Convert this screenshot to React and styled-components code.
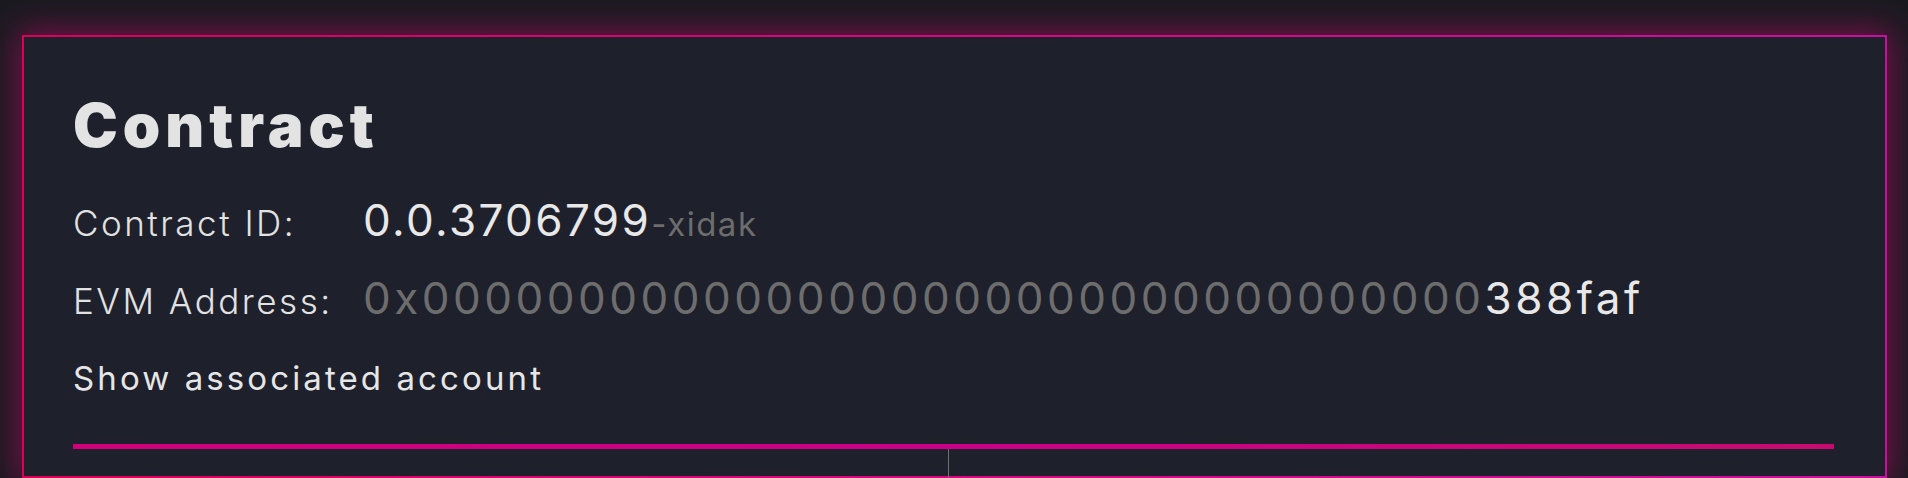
import React from 'react';
import styled, { createGlobalStyle } from 'styled-components';

const GlobalStyle = createGlobalStyle`
  html, body {
    margin: 0;
    padding: 0;
    background: #1b1a21;
    overflow: hidden;
  }
  body {
    font-family: Inter, "Noto Sans", sans-serif;
    color: #e4e4e4;
  }
`;

const Page = styled.div`
  height: 478px;
  padding: 35px 21px 0 22px;
  box-sizing: border-box;
`;

const Card = styled.section`
  background: #1e202c;
  border: 2px solid;
  border-image: linear-gradient(90deg, #dc0058, #d40a88 60%, #c810a0) 1;
  box-shadow: 0 0 30px 4px rgba(200, 10, 110, 0.55);
  padding: 52px 51px 0 49px;
  height: 100%;
  box-sizing: border-box;
`;

const Title = styled.h1`
  margin: 0;
  font-size: 60px;
  line-height: 72px;
  font-weight: 900;
  letter-spacing: 5px;
  color: #e3e3e3;
`;

const Row = styled.div`
  display: grid;
  grid-template-columns: 290px auto;
  align-items: baseline;
  line-height: 56px;
  margin-top: ${(p) => p.$gap}px;
`;

const Label = styled.span`
  font-size: 35px;
  font-weight: 300;
  letter-spacing: 2.5px;
  color: #e2e2e2;
`;

const Value = styled.span`
  font-size: 44px;
  font-weight: 400;
  letter-spacing: ${(p) => p.$spacing}px;
  color: #e8e8e8;
  white-space: nowrap;
`;

const Dim = styled.span`
  color: #6d6d6d;
  font-size: ${(p) => p.$size || 44}px;
  letter-spacing: ${(p) => (p.$size ? '1.5px' : 'inherit')};
`;

const ShowLink = styled.a`
  display: block;
  margin-top: 29px;
  font-size: 33px;
  line-height: 40px;
  font-weight: 400;
  letter-spacing: 3.1px;
  color: #e6e6e6;
  cursor: pointer;
`;

const Divider = styled.hr`
  margin: 46px 0 0;
  border: none;
  height: 5px;
  background: linear-gradient(90deg, #d2007a, #cc0088 50%, #c80a70);
`;

const Columns = styled.div`
  display: grid;
  grid-template-columns: 875px 1fr;
  height: 80px;
`;

const Column = styled.div`
  border-left: ${(p) => (p.$split ? '1px solid #707070' : 'none')};
`;

export default function App() {
  return (
    <>
      <GlobalStyle />
      <Page>
        <Card>
          <Title>Contract</Title>
          <Row $gap={31}>
            <Label>Contract ID:</Label>
            <Value $spacing={2.4}>
              0.0.3706799<Dim $size={33}>-xidak</Dim>
            </Value>
          </Row>
          <Row $gap={18}>
            <Label>EVM Address:</Label>
            <Value $spacing={3.5}>
              <Dim>0x0000000000000000000000000000000000</Dim>388faf
            </Value>
          </Row>
          <ShowLink>Show associated account</ShowLink>
          <Divider />
          <Columns>
            <Column />
            <Column $split />
          </Columns>
        </Card>
      </Page>
    </>
  );
}
